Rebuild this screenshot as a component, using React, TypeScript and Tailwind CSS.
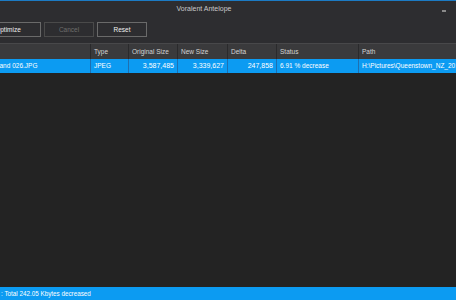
import React from "react";

const cols = [
  { label: "Name", w: "w-[101px]", right: false },
  { label: "Type", w: "w-[38px]", right: false },
  { label: "Original Size", w: "w-[49px]", right: true },
  { label: "New Size", w: "w-[50px]", right: true },
  { label: "Delta", w: "w-[49px]", right: true },
  { label: "Status", w: "w-[82px]", right: false },
  { label: "Path", w: "w-[117px]", right: false },
];

const row = [
  "Island 026.JPG",
  "JPEG",
  "3,587,485",
  "3,339,627",
  "247,858",
  "6.91 % decrease",
  "H:\\Pictures\\Queenstown_NZ_2013\\Island 026.JPG",
];

export default function App() {
  return (
    <div
      className="w-[456px] h-[300px] overflow-hidden bg-[#252526] text-[6.5px] flex flex-col"
      style={{ fontFamily: '"Liberation Sans", Arial, sans-serif' }}
    >
      {/* title bar */}
      <div className="h-[1px] bg-[#1c7bc4] shrink-0" />
      <div className="h-[21px] bg-[#2d2d30] flex items-center justify-center pr-[48px] relative shrink-0">
        <span className="text-[#c8c8c8] text-[7px] -mt-[5px]">Voralent Antelope</span>
        <span className="absolute right-[10px] top-[9px] w-[4px] h-[2px] bg-[#8a8a8a]" />
      </div>

      {/* toolbar */}
      <div className="h-[21px] bg-[#2d2d30] flex items-start gap-[3px] -ml-[25px] shrink-0">
        <button className="w-[66px] h-[15px] border border-[#6a6a6a] text-[#f0f0f0] bg-[#2d2d30]">
          Optimize
        </button>
        <button className="w-[50px] h-[15px] border border-[#4a4a4a] text-[#6d6d6d] bg-[#2d2d30]">
          Cancel
        </button>
        <button className="w-[50px] h-[15px] border border-[#6a6a6a] text-[#f0f0f0] bg-[#2d2d30]">
          Reset
        </button>
      </div>

      {/* table */}
      <div className="flex flex-col -ml-[11px]">
        <div className="flex h-[16px] bg-[#3a3a3c] border-t border-[#48484a]">
          {cols.map((c, i) => (
            <div
              key={i}
              className={`${c.w} shrink-0 h-full border-l border-[#2a2a2c] px-[3px] flex items-center text-[#d4d4d4] whitespace-nowrap overflow-hidden`}
            >
              {i === 0 ? "" : c.label}
            </div>
          ))}
        </div>
        <div className="flex h-[14px] bg-[#0c9bf2]">
          {row.map((v, i) => (
            <div
              key={i}
              className={`${cols[i].w} shrink-0 h-full border-l border-[#1f6fb0] px-[3px] flex items-center ${
                cols[i].right ? "justify-end text-[7px]" : "justify-start"
              } text-white whitespace-nowrap overflow-hidden`}
            >
              {v}
            </div>
          ))}
        </div>
      </div>

      <div className="flex-1 bg-[#232323]" />

      {/* status bar */}
      <div className="h-[13px] bg-[#0c9bf2] flex items-center pl-[1px] text-white text-[6.3px] whitespace-nowrap shrink-0">
        <span>: Total 242.05 Kbytes decreased</span>
      </div>
    </div>
  );
}
